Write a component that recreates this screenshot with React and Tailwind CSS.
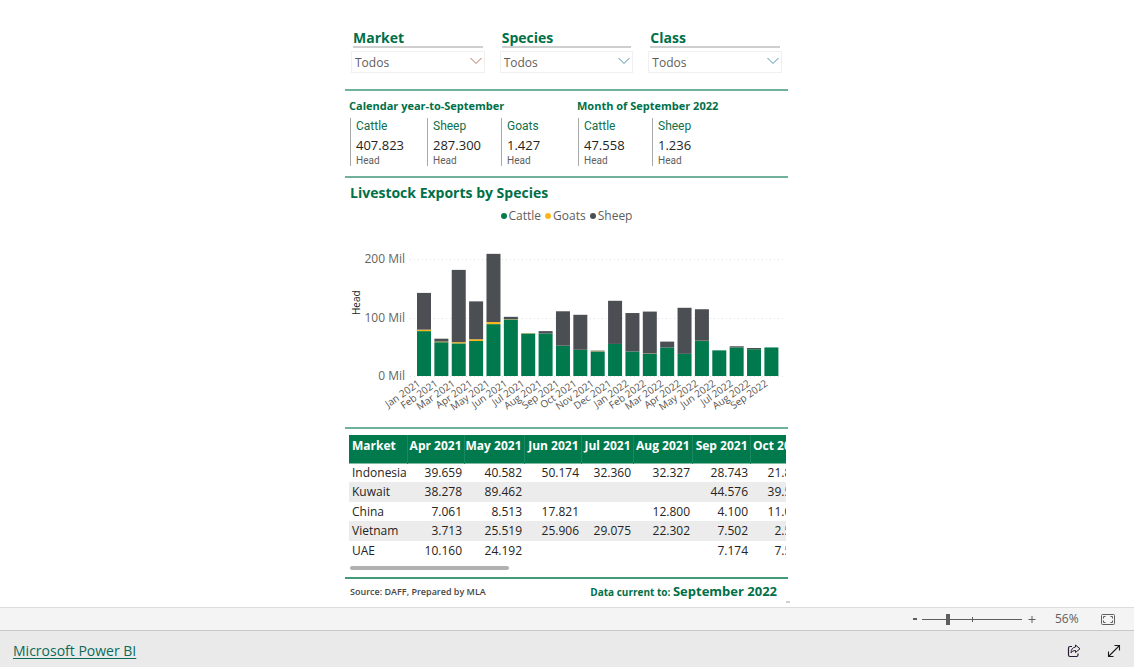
import React, { useState } from 'react';

const SLICERS = ['Market', 'Species', 'Class'];

const KPI_GROUPS = [
  {
    title: 'Calendar year-to-September',
    items: [
      { label: 'Cattle', value: '407.823', width: 'w-[77px]' },
      { label: 'Sheep', value: '287.300', width: 'w-[74px]' },
      { label: 'Goats', value: '1.427', width: 'w-[76px]' },
    ],
  },
  {
    title: 'Month of September 2022',
    items: [
      { label: 'Cattle', value: '47.558', width: 'w-[74px]' },
      { label: 'Sheep', value: '1.236', width: 'w-[74px]' },
    ],
  },
];

const LEGEND = [
  { label: 'Cattle', color: 'bg-[#007a4c]' },
  { label: 'Goats', color: 'bg-[#fdb71a]' },
  { label: 'Sheep', color: 'bg-[#4b4e53]' },
];

// values in millions: cattle, goats, sheep
const EXPORTS = [
  { month: 'Jan 2021', values: [77, 2.5, 63] },
  { month: 'Feb 2021', values: [58, 1, 5] },
  { month: 'Mar 2021', values: [56, 2, 124] },
  { month: 'Apr 2021', values: [60, 3, 65] },
  { month: 'May 2021', values: [89, 3.5, 117] },
  { month: 'Jun 2021', values: [97, 0.5, 4] },
  { month: 'Jul 2021', values: [73, 0.5, 0] },
  { month: 'Aug 2021', values: [73, 0, 4] },
  { month: 'Sep 2021', values: [52, 0, 59] },
  { month: 'Oct 2021', values: [45, 0, 60] },
  { month: 'Nov 2021', values: [42, 0.5, 1] },
  { month: 'Dec 2021', values: [55, 0, 74] },
  { month: 'Jan 2022', values: [42, 0, 66] },
  { month: 'Feb 2022', values: [38, 0.5, 72] },
  { month: 'Mar 2022', values: [49, 0, 10] },
  { month: 'Apr 2022', values: [38, 0, 79] },
  { month: 'May 2022', values: [60, 0.5, 54] },
  { month: 'Jun 2022', values: [44, 0, 0] },
  { month: 'Jul 2022', values: [49, 0, 2] },
  { month: 'Aug 2022', values: [46, 0, 2] },
  { month: 'Sep 2022', values: [49, 0, 0] },
];

const SERIES_FILL = ['fill-[#007a4c]', 'fill-[#fdb71a]', 'fill-[#4b4e53]'];

const COLUMNS = [
  { label: 'Market', width: 'w-[58px]' },
  { label: 'Apr 2021', width: 'w-[57px]' },
  { label: 'May 2021', width: 'w-[60px]' },
  { label: 'Jun 2021', width: 'w-[57px]' },
  { label: 'Jul 2021', width: 'w-[52px]' },
  { label: 'Aug 2021', width: 'w-[59px]' },
  { label: 'Sep 2021', width: 'w-[58px]' },
  { label: 'Oct 2021', width: 'w-[57px]' },
];

const ROWS = [
  ['Indonesia', '39.659', '40.582', '50.174', '32.360', '32.327', '28.743', '21.864'],
  ['Kuwait', '38.278', '89.462', '', '', '', '44.576', '39.520'],
  ['China', '7.061', '8.513', '17.821', '', '12.800', '4.100', '11.060'],
  ['Vietnam', '3.713', '25.519', '25.906', '29.075', '22.302', '7.502', '2.520'],
  ['UAE', '10.160', '24.192', '', '', '', '7.174', '7.520'],
];

const Slicer = ({ name, warm }) => {
  const id = `slicer-${name.toLowerCase()}`;
  return (
    <div className="flex-1">
      <label
        htmlFor={id}
        className="mx-0.5 block h-[19px] border-b-2 border-[#cfcfcf] text-sm leading-[18px] font-bold text-[#007048]"
      >
        {name}
      </label>
      <div className="relative mt-[3px]">
        <select
          id={id}
          className="block h-[22px] w-full appearance-none border border-[#f0f0f0] bg-white px-[3px] pt-0.5 text-xs text-[#5f5d5b]"
        >
          <option>Todos</option>
        </select>
        <svg
          viewBox="0 0 12 8"
          className={`pointer-events-none absolute top-[6px] right-[3px] h-2 w-3 fill-none ${warm ? 'stroke-[#b5735a]' : 'stroke-[#4a94ad]'}`}
        >
          <path d="M0.5 1 L6 6.5 L11.5 1" />
        </svg>
      </div>
    </div>
  );
};

const ExportsChart = () => {
  const base = 146;
  const scale = 0.583;
  return (
    <svg viewBox="0 0 438 197" className="block w-full" role="img" aria-label="Livestock Exports by Species">
      {[0, 100, 200].map((tick) => {
        const y = Math.round(base - tick * scale) + 0.5;
        return (
          <g key={tick}>
            <line x1="61" x2="436" y1={y} y2={y} strokeDasharray="1 3" className="stroke-[#e0e0e0]" />
            <text x="56" y={y + 3} textAnchor="end" className="fill-[#666462] text-xs">
              {tick} Mil
            </text>
          </g>
        );
      })}
      <text transform="translate(11 85) rotate(-90)" className="fill-[#252423] text-[10px] font-medium">
        Head
      </text>
      {EXPORTS.map(({ month, values }, i) => {
        const x = 68 + i * 17.37;
        let top = base;
        return (
          <g key={month}>
            {values.map((value, s) => {
              const height = value * scale;
              top -= height;
              return <rect key={s} x={x} y={top} width="14" height={height} className={SERIES_FILL[s]} />;
            })}
            <text
              transform={`translate(${x + 4} 155) rotate(-35)`}
              textAnchor="end"
              className="fill-[#55524f] text-[10px]"
            >
              {month}
            </text>
          </g>
        );
      })}
    </svg>
  );
};

const MarketTable = () => (
  <div className="ml-1 mr-0.5 overflow-hidden">
    <table className="w-[458px] table-fixed border-collapse text-xs text-[#252423]">
      <thead>
        <tr className="h-7 border-b border-[#80bca5] bg-[#007a4c] text-white">
          {COLUMNS.map(({ label, width }, i) => (
            <th
              key={label}
              className={`${width} border-r border-[#1a8760] pt-[3px] align-top leading-4 font-bold whitespace-nowrap ${i === 0 ? 'pl-[3px] text-left' : 'pr-0.5 text-right'}`}
            >
              {label}
            </th>
          ))}
        </tr>
      </thead>
      <tbody>
        {ROWS.map((row) => (
          <tr key={row[0]} className="odd:h-[19px] even:h-5 even:bg-[#ececec]">
            {row.map((cell, i) => (
              <td
                key={i}
                className={`p-0 leading-4 whitespace-nowrap ${i === 0 ? 'pl-[3px]' : 'pr-0.5 text-right'}`}
              >
                {cell}
              </td>
            ))}
          </tr>
        ))}
      </tbody>
    </table>
    <div className="mt-1.5 ml-px h-1 w-[159px] rounded-full bg-[#b1b1b1]" />
  </div>
);

const Report = () => (
  <main className="mx-auto w-full max-w-[444px] pt-[29px] pr-px">
    <div className="flex gap-[15px] px-1.5">
      {SLICERS.map((name, i) => (
        <Slicer key={name} name={name} warm={i === 0} />
      ))}
    </div>

    <section className="mt-4 flex h-[89px] border-y-2 border-[#6fb19b] pt-[7px] pl-1">
      {KPI_GROUPS.map((group) => (
        <div key={group.title}>
          <h2 className="text-[11px] leading-4 font-bold text-[#007048]">{group.title}</h2>
          <div className="mt-1 flex pl-px">
            {group.items.map(({ label, value, width }) => (
              <div key={label} className={`${width} h-12 border-l border-[#a8a8a8] pl-[5px]`}>
                <p className="font-[Roboto,sans-serif] text-xs leading-4 text-[#10704c]">{label}</p>
                <p className="mt-[3px] text-[13px] leading-4 text-[#252423]">{value}</p>
                <p className="mt-0.5 font-[Roboto,sans-serif] text-[10px] leading-3 text-[#605e5c]">Head</p>
              </div>
            ))}
          </div>
        </div>
      ))}
    </section>

    <section className="border-b-2 border-[#6fb19b]">
      <h2 className="pt-[3px] pl-[5px] text-sm leading-6 font-bold text-[#007048]">Livestock Exports by Species</h2>
      <ul className="mt-[3px] flex h-4 justify-center gap-1 text-xs leading-4 text-[#605e5c]">
        {LEGEND.map(({ label, color }) => (
          <li key={label} className="flex items-center gap-0.5">
            <span className={`size-1.5 rounded-full ${color}`} />
            {label}
          </li>
        ))}
      </ul>
      <div className="mt-1.5 ml-1 mr-px">
        <ExportsChart />
      </div>
    </section>

    <section className="border-b-2 border-[#3f9b78] pt-1.5 pb-[7px]">
      <MarketTable />
    </section>

    <footer className="h-[26px]">
      <div className="flex h-[22px] items-start justify-between pt-1 pr-[11px] pl-[5px]">
        <p className="text-[9px] leading-[18px] font-semibold text-[#484644]">Source: DAFF, Prepared by MLA</p>
        <p className="text-[10px] leading-4 font-bold text-[#007048]">
          Data current to: <span className="text-[13px]">September 2022</span>
        </p>
      </div>
      <div className="-mr-0.5 ml-auto h-0.5 w-1 bg-[#d0d0d0]" />
    </footer>
  </main>
);

const ZoomBar = () => {
  const [zoom, setZoom] = useState(25);
  return (
    <div className="flex h-[23px] items-center justify-end border-t border-[#dcdcdc] bg-[#f4f4f4] pr-[19px] text-[#605e5c]">
      <button aria-label="Zoom out" onClick={() => setZoom(Math.max(0, zoom - 5))} className="flex size-3 items-center justify-center">
        <span className="h-0.5 w-1 bg-[#605e5c]" />
      </button>
      <div className="relative mx-px flex h-3 items-center">
        <input
          type="range"
          aria-label="Zoom"
          value={zoom}
          onChange={(e) => setZoom(Number(e.target.value))}
          className="h-3 w-[100px] appearance-none bg-transparent [&::-webkit-slider-runnable-track]:h-px [&::-webkit-slider-runnable-track]:bg-[#605e5c] [&::-webkit-slider-thumb]:-mt-[5px] [&::-webkit-slider-thumb]:h-[11px] [&::-webkit-slider-thumb]:w-1 [&::-webkit-slider-thumb]:appearance-none [&::-webkit-slider-thumb]:bg-[#605e5c]"
        />
        <span className="pointer-events-none absolute top-1 left-1/2 h-[5px] w-px bg-[#605e5c]" />
      </div>
      <button aria-label="Zoom in" onClick={() => setZoom(Math.min(100, zoom + 5))} className="ml-[3px] flex size-3 items-center justify-center">
        <svg viewBox="0 0 8 8" className="size-2 stroke-[#605e5c]">
          <path d="M0.5 4.5 H7.5 M4 1 V8" />
        </svg>
      </button>
      <span className="ml-[17px] w-[46px] text-xs">56%</span>
      <button aria-label="Fit to page">
        <svg viewBox="0 0 14 11" className="h-[11px] w-3.5 fill-none stroke-[#605e5c]">
          <rect x="0.5" y="0.5" width="13" height="10" rx="1" />
          <path d="M4.5 2.5 H2.5 V4.5 M9.5 2.5 H11.5 V4.5 M4.5 8.5 H2.5 V6.5 M9.5 8.5 H11.5 V6.5" />
        </svg>
      </button>
    </div>
  );
};

const BottomBar = () => (
  <div className="flex h-[37px] items-center justify-between border-t border-[#c8c8c8] bg-[#eaeaea] px-[13px] pt-1">
    <a href="#" className="text-sm leading-5 text-[#0b6a5a] underline underline-offset-2">
      Microsoft Power BI
    </a>
    <div className="flex items-center gap-[26px]">
      <button aria-label="Share">
        <svg viewBox="0 0 14 14" className="size-3.5 fill-none stroke-[#2b1a33]">
          <path d="M5 2.5 H3 Q1.5 2.5 1.5 4 V11 Q1.5 12.5 3 12.5 H9.5 Q11 12.5 11 11 V9.5" strokeWidth="1.2" />
          <path d="M8.5 1 L13 4.8 L8.5 8.5 V6.5 Q5.5 6.3 4 8.8 Q4.2 3.6 8.5 3 Z" strokeLinejoin="round" />
        </svg>
      </button>
      <button aria-label="Full screen">
        <svg viewBox="0 0 14 14" className="size-3.5 fill-none stroke-[#1b1b1b]">
          <path d="M1.5 12.5 L12.5 1.5 M7.5 1.5 H12.5 V6.5 M1.5 7.5 V12.5 H6.5" strokeWidth="1.1" />
        </svg>
      </button>
    </div>
  </div>
);

const App = () => (
  <div className="flex min-h-screen flex-col bg-white font-['Open_Sans','Noto_Sans',sans-serif]">
    <div className="flex-1">
      <Report />
    </div>
    <ZoomBar />
    <BottomBar />
  </div>
);

export default App;
